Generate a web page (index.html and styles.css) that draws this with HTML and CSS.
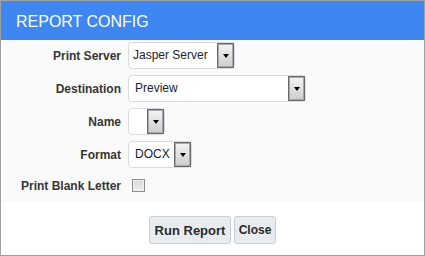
FILE: index.html
```html
<!DOCTYPE html>
<html lang="en">
<head>
    <meta charset="UTF-8">
    <title>Report Config</title>
    <link rel="stylesheet" href="styles.css">
</head>
<body>
    <div class="dialog">
        <div class="dialog-header">REPORT CONFIG</div>
        <form class="config-form">
            <label class="field-label">Print Server</label>
            <div class="dropdown dropdown-server">
                <span class="dropdown-value">Jasper Server</span>
                <span class="dropdown-btn"></span>
            </div>

            <label class="field-label">Destination</label>
            <div class="dropdown dropdown-destination">
                <span class="dropdown-value">Preview</span>
                <span class="dropdown-btn"></span>
            </div>

            <label class="field-label">Name</label>
            <div class="dropdown dropdown-name">
                <span class="dropdown-value"></span>
                <span class="dropdown-btn"></span>
            </div>

            <label class="field-label">Format</label>
            <div class="dropdown dropdown-format">
                <span class="dropdown-value">DOCX</span>
                <span class="dropdown-btn"></span>
            </div>

            <label class="field-label" for="blankLetter">Print Blank Letter</label>
            <input type="checkbox" id="blankLetter" class="checkbox">
        </form>
        <div class="dialog-footer">
            <button type="button" class="btn btn-run">Run Report</button>
            <button type="button" class="btn btn-close">Close</button>
        </div>
    </div>
</body>
</html>
```

FILE: styles.css
```css
html, body {
    margin: 0;
    padding: 0;
    background: #ffffff;
}
.dialog {
    width: 425px;
    height: 256px;
    box-sizing: border-box;
    border: 1px solid #a0a0a0;
    background: #fafafa;
    display: flex;
    flex-direction: column;
    font-family: "Liberation Sans", Arial, sans-serif;
}
.dialog-header {
    height: 39px;
    box-sizing: border-box;
    padding: 1px 0 0 15px;
    line-height: 39px;
    background: #3e86f1;
    color: #ffffff;
    font-size: 16px;
}
/* form grid: labels right aligned, controls left */
.config-form {
    display: grid;
    grid-template-columns: 120px auto;
    grid-template-rows: repeat(4, 27px) 23px;
    column-gap: 7px;
    row-gap: 6px;
    padding: 2px 0 5px;
    margin: 0;
}
.field-label {
    justify-self: end;
    align-self: center;
    font-size: 12px;
    font-weight: bold;
    color: #363636;
}
.dropdown {
    justify-self: start;
    display: flex;
    height: 27px;
    box-sizing: border-box;
    border: 1px solid #d8dce2;
    border-radius: 4px;
    background: #ffffff;
}
.dropdown-value {
    flex: 1;
    padding-left: 4px;
    line-height: 25px;
    font-size: 12px;
    color: #222233;
    white-space: nowrap;
}
.dropdown-btn {
    width: 17px;
    box-sizing: border-box;
    border: 1px solid #6a6a6a;
    box-shadow: inset 0 0 0 1px #a8a8a8;
    background: linear-gradient(#f4f4f4, #cdcdcd);
    display: flex;
    align-items: center;
    justify-content: center;
}
.dropdown-btn::after {
    content: "";
    border-left: 3px solid transparent;
    border-right: 3px solid transparent;
    border-top: 4px solid #000000;
}
.dropdown-server { width: 107px; }
.dropdown-destination { width: 178px; }
.dropdown-destination .dropdown-value,
.dropdown-format .dropdown-value { padding-left: 6px; }
.dropdown-name { width: 37px; }
.dropdown-format { width: 64px; }
.checkbox {
    -webkit-appearance: none;
    appearance: none;
    justify-self: start;
    align-self: center;
    width: 13px;
    height: 13px;
    margin: 0 0 0 4px;
    box-sizing: border-box;
    border: 1px solid #8c8c8c;
    box-shadow: inset 0 0 0 1px #f2f2f2;
    background: linear-gradient(#d6d6d6, #f0f0f0);
}
.dialog-footer {
    flex: 1;
    display: flex;
    justify-content: center;
    align-items: flex-start;
    gap: 3px;
    padding-top: 14px;
    background: #ffffff;
}
.btn {
    height: 28px;
    padding: 0;
    border: 1px solid #c9ced5;
    border-radius: 3px;
    background: #e9ecef;
    color: #2b2b2b;
    font-family: "Liberation Sans", Arial, sans-serif;
    font-size: 13px;
    font-weight: bold;
}
.btn-run { width: 82px; }
.btn-close { width: 42px; font-size: 12px; }
```
